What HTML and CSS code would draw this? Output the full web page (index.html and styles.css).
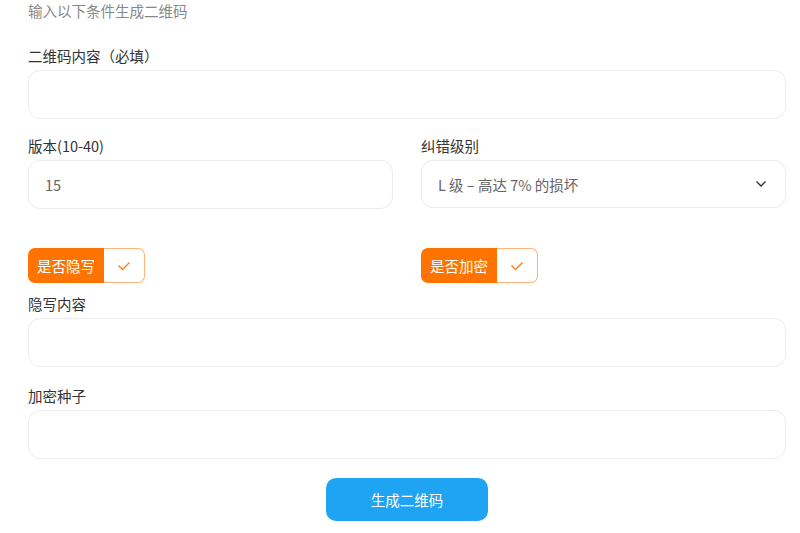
FILE: index.html
```html
<!DOCTYPE html>
<html lang="zh-CN">
<head>
  <meta charset="UTF-8">
  <title>生成二维码</title>
  <link rel="stylesheet" href="styles.css">
</head>
<body>

  <div class="page">
    <p class="hint">输入以下条件生成二维码</p>

    <form class="qr-form">
      <div class="field first">
        <label for="content">二维码内容（必填）</label>
        <input type="text" id="content" class="input">
      </div>

      <div class="row">
        <div class="field">
          <label for="version">版本(10-40)</label>
          <input type="text" id="version" class="input" value="15">
        </div>
        <div class="field">
          <label for="level">纠错级别</label>
          <div class="select">
            <span>L 级 – 高达 7% 的损坏</span>
            <svg width="12" height="8" viewBox="0 0 12 8"><path d="M1.5 1.5 6 6l4.5-4.5" fill="none" stroke="#333" stroke-width="1.3"/></svg>
          </div>
        </div>
      </div>

      <div class="row toggles">
        <div class="toggle">
          <span class="toggle-label">是否隐写</span>
          <span class="toggle-box"><svg width="14" height="10" viewBox="0 0 14 10"><path d="M1.5 4.5 5.5 8.5 12.5 1.5" fill="none" stroke="#ff7a1a" stroke-width="1.3"/></svg></span>
        </div>
        <div class="toggle">
          <span class="toggle-label">是否加密</span>
          <span class="toggle-box"><svg width="14" height="10" viewBox="0 0 14 10"><path d="M1.5 4.5 5.5 8.5 12.5 1.5" fill="none" stroke="#ff7a1a" stroke-width="1.3"/></svg></span>
        </div>
      </div>

      <div class="field tight">
        <label for="hidden">隐写内容</label>
        <input type="text" id="hidden" class="input">
      </div>

      <div class="field">
        <label for="seed">加密种子</label>
        <input type="text" id="seed" class="input">
      </div>

      <div class="actions">
        <button type="button">生成二维码</button>
      </div>
    </form>
  </div>

</body>
</html>
```

FILE: styles.css
```css
body {
  margin: 0;
  font-family: "Noto Sans CJK SC", "Noto Sans", sans-serif;
  font-size: 14.5px;
  color: #333;
  background: #fff;
}
.page {
  padding: 0 14px 0 28px;
}
.hint {
  margin: 0;
  line-height: 22px;
  color: #888;
}
.qr-form {
  display: flex;
  flex-direction: column;
}
.field {
  display: flex;
  flex-direction: column;
  margin-top: 19px;
}
.field.first {
  margin-top: 24px;
}
.row .field {
  margin-top: 17px;
}
.field.tight {
  margin-top: 11px;
}
label {
  line-height: 20px;
  margin-bottom: 4px;
}
.input,
.select {
  box-sizing: border-box;
  height: 49px;
  border: 1px solid #ececec;
  border-radius: 12px;
  padding: 0 16px;
  font-family: inherit;
  font-size: 14.5px;
  color: #666;
  background: #fff;
  outline: none;
}
.row {
  display: grid;
  grid-template-columns: 1fr 1fr;
  gap: 28px;
}
.select {
  display: flex;
  align-items: center;
  justify-content: space-between;
  padding-right: 18px;
  height: 48px;
}
.toggles {
  margin-top: 39px;
}
.toggle {
  display: flex;
  height: 35px;
  width: 117px;
}
.toggle-label {
  display: flex;
  align-items: center;
  padding: 0 9px;
  white-space: nowrap;
  background: #ff7300;
  color: #fff;
  border-radius: 7px 0 0 7px;
}
.toggle-box {
  display: flex;
  align-items: center;
  justify-content: center;
  flex: 1;
  border: 1px solid #ffb27a;
  border-left: none;
  border-radius: 0 7px 7px 0;
}
.actions {
  display: flex;
  justify-content: center;
  margin-top: 19px;
}
button {
  width: 162px;
  height: 43px;
  border: none;
  border-radius: 10px;
  background: #1fa3f3;
  color: #fff;
  font-family: inherit;
  font-size: 14.5px;
  cursor: pointer;
}
```
